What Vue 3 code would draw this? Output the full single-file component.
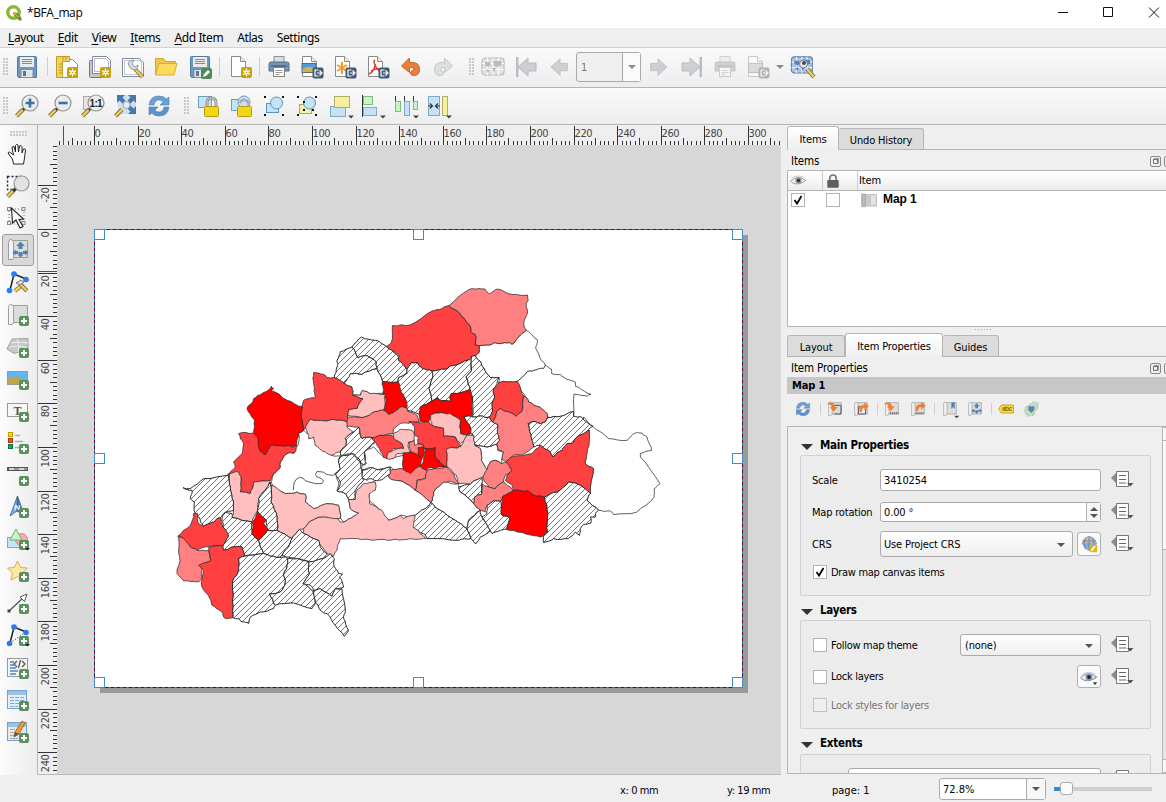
<script setup>
// ---------- icon fragments ----------
const plus = '<g transform="translate(13 13)"><rect width="10" height="10" rx="2" fill="#5b8f5b"/><path d="M5 2v6M2 5h6" stroke="#fff" stroke-width="2"/></g>'
const star = '<g transform="translate(12 12)"><rect width="11" height="11" rx="2" fill="#c5a20c"/><path d="M5.500 1.500v8M2 3.500l7 4M9 3.500l-7 4" stroke="#fff" stroke-width="1.300"/><circle cx="5.500" cy="5.500" r="2" fill="#fff"/><circle cx="5.500" cy="5.500" r=".8" fill="#c5a20c"/></g>'
const exp = (c = '#415a75') => `<g transform="translate(12.500 12.500)"><rect width="11" height="11" rx="2" fill="${c}"/><path d="M6 2.500H2.500v6H6M4.500 5.500h4M7 3l2.500 2.500L7 8" fill="none" stroke="#fff" stroke-width="1.200"/></g>`
const pageShape = '<path d="M2.500 1.500h9l5 5v15h-14z" fill="#fff" stroke="#8a8a8a"/><path d="M11.500 1.500v5h5" fill="#eee" stroke="#8a8a8a"/>'
const floppy = '<path d="M2.500 2.500q0-1 1-1h17q1 0 1 1v20h-18l-1-1z" fill="#6d97c4" stroke="#54779f"/><rect x="5" y="2" width="14" height="10" fill="#ececec"/><path d="M7 4.500h10M7 6.500h10M7 8.500h10" stroke="#888"/><path d="M6 14.500h12v8H6z" fill="#e4e4e4" stroke="#7a8ea5"/><rect x="8" y="16" width="3" height="5" fill="#54779f"/>'
const handle = (x1, y1, x2, y2) => `<path d="M${x1} ${y1}L${x2} ${y2}" stroke="#75683c" stroke-width="4"/><path d="M${x1} ${y1}L${x2} ${y2}" stroke="#f0cf5a" stroke-width="2.400"/>`
const lens = handle(8, 15.5, 1.5, 22) + '<path d="M10.500 13.500L8 16" stroke="#333" stroke-width="3"/><circle cx="15" cy="9" r="8" fill="#ececec" stroke="#929292" stroke-width="1.200"/>'
const curl = '<path d="M4.500 2.500h17v17h-17z" fill="#dcdcdc" stroke="#9c9c9c"/><path d="M2.500 21.500v-17q0-3 2.500-3t2.500 3v15q0 2-2.500 2z" fill="#f3f3f3" stroke="#9c9c9c"/>'
const printer = '<rect x="7" y="1.500" width="10" height="8" fill="#d8dfe5" stroke="#87939d"/><path d="M2 9q0-2 2-2h16q2 0 2 2v7H2z" fill="#7795b8" stroke="#526e89"/><path d="M4 11h16" stroke="#48627b" stroke-width="1.500"/><rect x="6.500" y="12.500" width="11" height="9" fill="#fff" stroke="#808080"/><path d="M8.500 15.500h7M8.500 17.500h7M8.500 19.500h4" stroke="#999"/>'
const refresh = '<path d="M2 11q1-9 10-9 5 0 7 3l3-2v8h-9l3-3q-1-2-4-2-4 0-5 5z" fill="#6d9fd0" stroke="#4c80b5" stroke-width=".6"/><path d="M22 13q-1 9-10 9-5 0-7-3l-3 2v-8h9l-3 3q1 2 4 2 4 0 5-5z" fill="#5d92c8" stroke="#4c80b5" stroke-width=".6"/>'
const corners = '<g fill="#111"><rect x="2" y="2" width="2" height="2"/><rect x="20" y="2" width="2" height="2"/><rect x="2" y="20" width="2" height="2"/><rect x="20" y="20" width="2" height="2"/></g>'
const padlock = '<path d="M11 13v-4q0-5 4.500-5t4.500 5v4" fill="none" stroke="#909090" stroke-width="3"/><path d="M11 13v-4q0-5 4.500-5t4.500 5v4" fill="none" stroke="#d8d8d8" stroke-width="1"/><rect x="8.500" y="12.500" width="14" height="10" rx="1" fill="#f2d61b" stroke="#b89d10"/>'
const drop = '<path d="M19 21.500h6l-3 3z" fill="#444"/>'
const arrowL = 'M1 12L11 3v5h8v8h-8v5z'
const node = '<path d="M4 20L8 4l12 5" fill="none" stroke="#222" stroke-width="1.500"/>'
const dots = '<g fill="#2b7bf0"><circle cx="8" cy="4" r="2.800"/><circle cx="20" cy="9.500" r="2.800"/><circle cx="3.500" cy="20.500" r="2.800"/></g>'
const fourArrows = '<g transform="translate(14.500 11.500)" fill="#5580b0"><path d="M0-8l4.500 4.500h-2.500v3h-4v-3h-2.500zM0 8l3-3h-1v-2.500h-4V5h-1zM-8 3l3-3v1.500h2.500v3H-5V6zM8 3L5 0v1.500H2.500v3H5V6z"/></g>'
const gridMap = (f, s) => `<rect x="1" y="3" width="22" height="17" rx="3" fill="${f}" stroke="${s}" stroke-width="1.200"/><path d="M6.500 3v17M12 3v17M17.500 3v17M1 8.500h22M1 14.500h22" stroke="#fff" stroke-width="1"/><path d="M4 7h5l1 3-3 2-3-2zM12 6h8l1 4-5 2-3-1zM11 13h4l-2 5zM5 14l4 1-2 3z" fill="${s}"/>`
const eye = '<path d="M1 13Q11 3 22 12 12 20 3 15z" fill="#f6f6f6" stroke="#9b9b9b" stroke-width="1.400"/><path d="M2 9Q11 3 20 8" fill="none" stroke="#bbb"/>'

const icons = {
  save: floppy,
  newLayout: '<path d="M5.500 4.500h12l5 5v13h-17z" fill="#fff" stroke="#8a8a8a"/><path d="M1.500 1.500h13v5h-7v16h-6z" fill="#f3d45a" stroke="#c39c25"/><path d="M4 9h3M4 12h3M4 15h3M4 18h3M8 2v3M11 2v3" stroke="#b8921f"/>' + star,
  dup: '<rect x="1.500" y="5.500" width="17" height="17" rx="1" fill="#c6c6c6" stroke="#777"/><path d="M4.500 1.500h14l4 4v13h-18z" fill="#fff" stroke="#888"/><path d="M6.500 3.500h11l3 3v10h-14z" fill="#fff" stroke="#a9b9e0"/>' + star,
  manager: '<path d="M1.500 3.500h17l4 4v14h-21z" fill="#fff" stroke="#8a8a8a"/><rect x="3.500" y="5.500" width="17" height="14" fill="none" stroke="#b9c8ea"/>' + handle(14, 14, 21.5, 22) + '<path d="M13 5l-2 4 3 3 3-2q0 5-4 5-4-1-5-4l-1-3q1-3 6-3z" fill="#d8dadb" stroke="#828686" stroke-width=".8"/>',
  open: '<path d="M1.500 20V3.500h8l2 3h10V10" fill="#eec648" stroke="#d0a63a"/><path d="M1.500 20L5 8.500h18L20 20z" fill="#fbda5c" stroke="#d8ae40"/>',
  saveAs: floppy + '<g transform="translate(13 13)"><rect width="11" height="11" rx="2" fill="#4e8b56"/><path d="M2 9l1-3 4-4 2 2-4 4z" fill="#fff"/></g>',
  addPage: pageShape + star,
  print: printer,
  exImg: pageShape + '<rect x="2" y="8.500" width="14" height="9" fill="#4c9ede" stroke="#666"/><path d="M2.500 17v-3q5-3 8-2l5 2v3z" fill="#c9b45b"/>' + exp(),
  exSvg: pageShape + '<g stroke="#f59a23" stroke-width="2"><path d="M9 7v12M4 10l10 6M14 10l-10 6"/></g>' + exp(),
  exPdf: pageShape + '<path d="M9 5q-2 1 0 5 2 5 6 7M3 19q5-2 6.500-10M5 16q5-3 10-2" fill="none" stroke="#e63b1f" stroke-width="1.400"/>' + exp(),
  undo: '<path d="M2.500 11l8-8v4.500h3q7 0 7 7 0 6-6 6 -3 0-3-2.500 0-2.500 3-2.500 1-3-3-3h-1v5z" fill="#e8803a" stroke="#c4652a"/>',
  redo: '<path d="M20.500 11l-8-8v4.500h-3q-7 0-7 7 0 6 6 6 3 0 3-2.500 0-2.500-3-2.500-1-3 3-3h1v5z" fill="#dde1de" stroke="#c3c8c4"/>',
  atlas: gridMap('#e2e2e2', '#bcbcbc'),
  first: `<g transform="translate(3 0)"><path d="${arrowL}" fill="#ccd0d4" stroke="#b6bbc0"/></g><rect x="2" y="2" width="2.500" height="20" fill="#b9bdc1"/>`,
  prev: `<g transform="translate(3 1) scale(.92)"><path d="${arrowL}" fill="#ccd0d4" stroke="#b6bbc0" stroke-width=".8"/></g>`,
  next: `<g transform="translate(22 1) scale(-.92 .92)"><path d="${arrowL}" fill="#ccd0d4" stroke="#b6bbc0" stroke-width=".8"/></g>`,
  last: `<g transform="translate(21 0) scale(-1 1)"><path d="${arrowL}" fill="#ccd0d4" stroke="#b6bbc0"/></g><rect x="19.500" y="2" width="2.500" height="20" fill="#b9bdc1"/>`,
  printOff: `<g opacity=".35" style="filter:grayscale(1)">${printer}</g>`,
  exOff: `<g opacity=".4" style="filter:grayscale(.8)">${pageShape}<rect x="2.500" y="8.500" width="14" height="9" fill="#a9b8c4" stroke="#777"/><path d="M3 17v-3q5-3 8-2l5 2v3z" fill="#c9b48b"/>${exp('#555')}</g>`,
  atlasSet: '<g transform="translate(-1.500 -1) scale(.95 .95)">' + gridMap('#a9c4e4', '#587fae') + '</g>' + handle(15, 14, 22, 22) + '<circle cx="11.500" cy="9" r="4" fill="#e8eef0" stroke="#777"/><circle cx="12" cy="8" r="2" fill="#446"/>',
  zin: lens + '<path d="M15 4.500v9M10.500 9h9" stroke="#3a6fa8" stroke-width="2.600"/>',
  zout: lens + '<path d="M10.500 9h9" stroke="#3a6fa8" stroke-width="2.600"/>',
  z11: '<rect x="2.500" y="2.500" width="16" height="13" fill="#e4e4e4" stroke="#aaa"/>' + lens + '<text x="8.500" y="13" font-size="10" font-weight="700" font-family="Liberation Sans, sans-serif" fill="#222" textLength="13">1:1</text>',
  zfull: '<rect x="4" y="1" width="18" height="19" fill="#cfdff0"/><g fill="#4577ab"><path d="M3 1h8L8.500 3.500l3 3-3 3-3-3L3 9zM22 1h-8l2.500 2.500-3 3 3 3 3-3L22 9zM22 20h-8l2.500-2.500-3-3 3-3 3 3L22 12z"/></g>' + handle(8, 15.5, 1.5, 22) + '<circle cx="12.500" cy="11" r="3.500" fill="#e8edf2" stroke="#8aa"/>',
  refresh,
  lock: '<rect x="2.500" y="2.500" width="13" height="11" fill="#c5e2f7" stroke="#6c9cbf"/>' + padlock,
  unlock: '<rect x="2.500" y="5.500" width="11" height="11" fill="#c5e2f7" stroke="#6c9cbf"/><circle cx="15" cy="8" r="6" fill="#c5e2f7" stroke="#6c9cbf"/><path d="M11 9q2-4 5-3 4 1 4 7" fill="none" stroke="#aaa" stroke-width="2.600"/><rect x="8.500" y="12.500" width="14" height="10" rx="1" fill="#f2d61b" stroke="#b89d10"/>',
  group: corners + '<rect x="4.500" y="9.500" width="12" height="9" fill="#c5e2f7" stroke="#5b93be"/><circle cx="14.500" cy="9" r="6" fill="#c5e2f7" stroke="#5b93be"/>',
  ungroup: corners + '<rect x="4.500" y="10.500" width="12" height="9" fill="#f6f1a3" stroke="#a9a26b"/><circle cx="14.500" cy="9" r="6" fill="#c5e2f7" stroke="#5b93be"/><g fill="#111"><rect x="8" y="7" width="2" height="2"/><rect x="8" y="15" width="2" height="2"/><rect x="17" y="15" width="2" height="2"/></g>',
  raise: '<rect x="1.500" y="12.500" width="15" height="10" fill="#c5e2f7" stroke="#7fa9c8"/><rect x="5.500" y="2.500" width="15" height="11" fill="#f4f09b" stroke="#b3ab68"/>' + drop,
  align: '<path d="M1.500 1v22" stroke="#333"/><rect x="2.500" y="2.500" width="9" height="8" fill="#c8f5c8" stroke="#82b982"/><rect x="2.500" y="13.500" width="13" height="8" fill="#c5e2f7" stroke="#7fa9c8"/>' + drop,
  distribute: '<path d="M1.500 2v7M10.500 2v7M19.500 2v7" stroke="#333"/><rect x="1.500" y="7.500" width="5" height="10" fill="#c8f5c8" stroke="#82b982"/><rect x="10.500" y="7.500" width="5" height="14" fill="#c5e2f7" stroke="#7fa9c8"/><rect x="19.500" y="7.500" width="4" height="8" fill="#c8f5c8" stroke="#82b982"/>' + drop,
  resize: '<rect x="1.500" y="2.500" width="11" height="19" fill="#c5e2f7" stroke="#7fa9c8"/><rect x="15.500" y="2.500" width="5" height="19" fill="#f4f09b" stroke="#b3ab68"/><path d="M1 12h4M3 9.500L5.500 12 3 14.500M13 12H9M11 9.500L8.500 12l2.500 2.500" fill="none" stroke="#333" stroke-width="1.200"/>' + drop,
  pan: '<path d="M7.500 22l-1-5-4-5q-1-2 1-2l4 3L6 6q0-2 2-1.500L9.500 10V3.500q1-2 2.500-.5l.5 7 1-6q2-1 2.500.5L16 11l1.500-4q1.500-1 2 1L18.500 16l-1 6z" fill="#fff" stroke="#222" stroke-width="1"/>',
  zoomTool: '<rect x="1.500" y="2.500" width="14" height="13" fill="none" stroke="#222" stroke-width="1.400" stroke-dasharray="2 2"/>' + handle(8, 16, 1.5, 22.5) + '<path d="M10 14.500L7 17" stroke="#333" stroke-width="3"/><circle cx="15.500" cy="9.500" r="7.500" fill="#e3e3e3" stroke="#999" stroke-width="1.200"/>',
  select: '<path d="M3 3h15v15H3z" fill="none" stroke="#777" stroke-dasharray="1 2"/><g fill="#eee" stroke="#888"><rect x="1.500" y="1.500" width="3" height="3"/><rect x="16" y="1.500" width="3" height="3"/><rect x="1.500" y="15.500" width="3" height="3"/><rect x="16" y="15.500" width="3" height="3"/></g><path d="M5.500 2l1 15 3.500-3 4 8 3-1.500-4-7 4.500-.5z" fill="#fff" stroke="#222" stroke-width="1.100"/>',
  moveContent: curl + fourArrows,
  editNodes: node + handle(9, 21, 17, 14) + handle(14, 14, 21, 21) + '<path d="M10 13l5-3 3 2-4 3z" fill="#ddd" stroke="#777"/>' + dots,
  addMap: curl + plus,
  add3d: '<path d="M1 14L6 4l16-.5v11l-8 2-6 2z" fill="#c9c9c9" stroke="#a0a0a0"/><path d="M5 8l8-1 9 1M3 12l10-1 8 2M11 4l2 7-1 6" stroke="#eee" fill="none"/>' + plus,
  addPic: '<rect x="1.500" y="4.500" width="20" height="13" fill="#63b5ea" stroke="#999"/><path d="M2 17v-5q8-4 12-1l7 3v3z" fill="#c4a44b"/>' + plus,
  addLabel: '<rect x="1.500" y="4.500" width="20" height="13" fill="#f7f7f7" stroke="#999"/><text x="7.500" y="15.500" font-size="12" font-weight="700" font-family="Liberation Serif, serif" fill="#555">T</text>' + plus,
  legend: '<rect x="2.500" y="1.500" width="4" height="4" fill="#ffd51a" stroke="#c99b00"/><rect x="2.500" y="7.500" width="4" height="4" fill="#f0501e" stroke="#a93815"/><rect x="2.500" y="13.500" width="4" height="4" fill="#12a85d" stroke="#0b7440"/><path d="M9 4.500h5M9 10.500h8M9 16.500h4" stroke="#aaa" stroke-width="1.600"/>' + plus,
  scalebar: '<rect x="1" y="4" width="21" height="4" fill="#555"/><path d="M3 6h5M13 6h5" stroke="#fff" stroke-width="1.600"/><path d="M8 6h5M18 6h3" stroke="#b0b0b0" stroke-width="1.600"/>' + plus,
  north: '<path d="M11.500 1L4 21l7-5z" fill="#86aede" stroke="#365f8e" stroke-width=".8"/><path d="M11.500 1l7 20-7.500-5z" fill="#4a77a8" stroke="#365f8e" stroke-width=".8"/><text x="8.500" y="14.500" font-size="8" font-weight="700" font-family="Liberation Sans, sans-serif" fill="#fff">N</text>' + plus,
  shape: '<rect x="1.500" y="10.500" width="13" height="10" fill="#c5e2f7" stroke="#7fa9c8"/><circle cx="15.500" cy="12.500" r="6" fill="#f5adad" stroke="#d58484"/><path d="M10 2l6 11H4z" fill="#c8f5c8" stroke="#72ac72"/>' + plus + '<path d="M19 21h5l-2.500 2.500z" fill="#222"/>',
  marker: '<path d="M11.500 2l3 6.500 7 .5-5 5 1.500 7-6.500-3.500L5 21l1.500-7L1.500 9l7-.5z" fill="#fce9a2" stroke="#dba95c"/>' + plus,
  arrow: '<path d="M3 20L18 6" stroke="#555" stroke-width="1.300"/><path d="M21 3l-7 3 4.500 4.500z" fill="#fff" stroke="#555"/><rect x="1.500" y="18.500" width="3" height="3" fill="#444"/>' + plus,
  nodeItem: node + '<path d="M4 20L20 9" stroke="#222" stroke-dasharray="1 2"/>' + dots + plus + '<path d="M19 21h5l-2.500 2.500z" fill="#222"/>',
  html: '<rect x="1.500" y="2.500" width="20" height="18" fill="#f4f4f4" stroke="#999"/><path d="M4 6h4M4 9h4M4 12h6M4 15h8M4 18h6" stroke="#4b87c2" stroke-width="1.500"/><path d="M11 5L8 8l3 3M16 5l3 3-3 3M14.500 4l-2 8" fill="none" stroke="#555" stroke-width="1.300"/>' + plus,
  table: '<rect x="1.500" y="2.500" width="19" height="18" fill="#e5eff9" stroke="#72a2cc"/><rect x="2" y="3" width="18" height="4" fill="#9cc1e3"/><path d="M4 9.500h14M4 12.500h14M4 15.500h14M4 18.500h8" stroke="#7ba9cf" stroke-dasharray="4 1"/>' + plus,
  tableEdit: '<rect x="1.500" y="2.500" width="19" height="18" fill="#e9e9e9" stroke="#72a2cc"/><rect x="2" y="3" width="18" height="4" fill="#9cc1e3"/><path d="M4 9.500h5M4 12.500h6M4 15.500h5M4 18.500h8" stroke="#aaa"/><path d="M9 12l7-11 3 2-6 11-5 3z" fill="#eb9a3d" stroke="#8e5b1d" stroke-width=".8"/><path d="M9 12l-1 5 5-3z" fill="#555"/>' + plus,
  viewTo: curl + '<path d="M8 6.500h13v13h-10" fill="none" stroke="#555" stroke-width="1.500"/><path d="M1 3q10-3 11 6h4l-6 7-6-7h3Q7 5 1 5z" fill="#ee7f35"/>',
  viewFrom: curl + '<path d="M8 8.500h11v11h-11z" fill="#eee" stroke="#555" stroke-width="1.500"/><path d="M10 17q-3-12 7-11V2l6.500 6L17 14v-4q-4 0-4 7z" fill="#ee7f35"/>',
  scaleTo: curl + '<path d="M9 18.500h13" stroke="#777" stroke-width="3" stroke-dasharray="2 1"/><path d="M1 3q10-3 11 5h4l-6 7-6-7h3Q7 5 1 5z" fill="#ee7f35"/>',
  scaleFrom: curl + '<path d="M8 18.500h13" stroke="#777" stroke-width="3" stroke-dasharray="2 1"/><path d="M9 15q-2-11 8-10V1l6.500 6L17 13V9q-5 0-5 6z" fill="#ee7f35"/>',
  bookmark: curl + '<path d="M14 2h5v10l-2.500-3-2.500 3z" fill="#4f82b5"/><path d="M18 22h8l-4 4z" fill="#444"/>',
  interact: curl + fourArrows,
  abc: '<path d="M1 12l4-6h18v12H5z" fill="#fbe04a" stroke="#bfa012" stroke-width="1.400"/><text x="6" y="15.500" font-size="10" font-weight="700" font-family="Liberation Sans, sans-serif" fill="#8a6d10" textLength="15">abc</text>',
  clip: '<path d="M4 9l6-4 5-4 8 2-1 9-4 2-1 7-11 2-4-7z" fill="#c3dac6" stroke="#86ad8b" stroke-dasharray="2 2"/><path d="M8 8h9v5l-4 5-5-4z" fill="#5b88a0"/>',
  eye: eye + '<circle cx="12" cy="12" r="4.500" fill="#999"/><circle cx="12" cy="12" r="2.300" fill="#333"/>',
  eyeMenu: eye + '<circle cx="12" cy="12" r="4.800" fill="#7b9cc0"/><circle cx="12" cy="12" r="2.500" fill="#223"/><path d="M17 19h6l-3 4z" fill="#444"/>',
  lockHead: '<path d="M7 12V8q0-5 5-5t5 5v4" fill="none" stroke="#777" stroke-width="2.600"/><rect x="3" y="11" width="18" height="12" rx="2" fill="#5e5e5e"/>',
  item: '<path d="M6 4h17v17H6z" fill="#e2e2e2" stroke="#999"/><path d="M1 3h6v19H1z" fill="#b9b9b9" stroke="#999"/><path d="M8 5h7v15H8z" fill="#c8c8c8"/>',
  globe: '<path d="M3 12q2-9 9-10 8 1 10 10z" fill="#b7bdc2" stroke="#7f8a92"/><path d="M3 12q4 9 10 9 7-1 8-9z" fill="#7cb0e2"/><path d="M12 2v19M7 4q-3 7 0 15M17 4q3 7 0 15M3 8h18" stroke="#6d7b88" fill="none"/><rect x="13" y="13" width="10" height="10" rx="1" fill="#e2b721"/><path d="M15 21l5-6" stroke="#fff" stroke-width="2"/>',
  dd: '<path d="M1 8l6-6v12z" fill="#8a8a8a"/><path d="M6.500 1.500h12v15h-12z" fill="#fff" stroke="#777"/><path d="M9 5.500h7M9 9.500h7M9 13h7" stroke="#666"/><path d="M17 13h6.500l-3.200 3.500z" fill="#555"/>',
}

// [name, left margin]
const row1 = [['grip', 3], ['save', 7], ['sep', 8], ['newLayout', 7], ['dup', 9], ['manager', 9], ['open', 9], ['saveAs', 10], ['sep', 7], ['addPage', 9], ['sep', 6], ['print', 7], ['exImg', 9], ['exSvg', 9], ['exPdf', 9], ['undo', 9], ['redo', 9], ['grip', 13], ['atlas', 7], ['first', 9], ['prev', 9], ['spin', 5], ['next', 5], ['last', 10], ['printOff', 9], ['exOff', 9], ['caret', 6], ['atlasSet', 8]]
const row2 = [['grip', 3], ['zin', 7], ['zout', 9], ['z11', 9], ['zfull', 9], ['refresh', 9], ['grip', 13], ['lock', 7], ['unlock', 9], ['group', 9], ['ungroup', 9], ['raise', 10], ['align', 8], ['distribute', 9], ['resize', 9]]
const side = ['pan', 'zoomTool', 'select', 'moveContent', 'editNodes', 'addMap', 'add3d', 'addPic', 'addLabel', 'legend', 'scalebar', 'north', 'shape', 'marker', 'arrow', 'nodeItem', 'html', 'table', 'tableEdit']
const propTools = [['refresh', 7], ['sep', 9], ['viewTo', 6], ['viewFrom', 10], ['sep', 8], ['scaleTo', 6], ['scaleFrom', 10], ['sep', 8], ['bookmark', 7], ['interact', 9], ['sep', 8], ['abc', 6], ['clip', 9]]
const menus = [['L', 'ayout'], ['E', 'dit'], ['V', 'iew'], ['I', 'tems'], ['A', 'dd Item'], ['', 'Atlas'], ['', 'Settings']]

// ---------- rulers ----------
const unit = 2.18
const ticks = (from, to, base) => {
  const out = []
  for (let v = from; v <= to; v += 2) out.push({ v, p: Math.round(base + v * unit) + 0.5, k: v % 20 === 0 ? 2 : v % 10 === 0 ? 1 : 0 })
  return out
}
const hTicks = ticks(-16, 314, 94)
const vTicks = ticks(-38, 248, 229)

// ---------- map provinces ----------
const origins = { A: [0, 0], B: [630, 0], C: [0, 450], D: [630, 420] }
const fills = { w: '#fff', p: '#ffbfbf', s: '#ff8080', r: '#ff4040', x: '#ff0000', h: 'url(#hatch)' }
const provinces = [
  ['C', 'w', '385,10 400,0 430,20 450,50 485,75 510,78 505,95 510,115 495,130 505,155 500,182 525,190 535,208 540,235 565,248 550,258 520,275 510,265 505,225 470,220 430,235 405,215 405,192 380,185 345,190 310,170 302,155 310,130 330,110 330,95 350,70 372,68 385,40'],
  ['C', 'w', '582,65 610,50 640,80 655,85 700,75 698,95 700,118 670,120 660,110 620,118 600,112 575,118 575,100 585,90'],
  ['D', 'w', '-15,150 10,145 30,175 65,182 105,210 152,247 135,265 108,285 80,290 60,285 25,300 5,275 -35,240 -35,190 -15,180'],
  ['D', 'w', '190,185 235,190 240,215 280,250 300,270 265,300 260,325 225,300 180,270 152,247 160,215'],
  ['D', 'w', '283,75 320,80 350,72 352,90 370,95 365,130 345,120 330,125 320,148 303,120 300,85'],
  ['D', 'w', '610,-10 637,18 685,55 740,60 760,40 785,38 800,50 814,90 780,100 780,110 839,190 822,205 822,230 768,276 700,283 690,272 655,270 620,240 630,220 640,145 614,130 628,30 610,38'],
  ['B', 'w', '495,254 513,266 514,280 540,282 552,292 585,305 586,318 620,338 632,342 620,348 608,346 581,341 580,408 560,404 540,408 502,411 500,400 478,380 445,365 430,340 410,303 430,286 440,274 470,268 490,264'],
  ['B', 'w', '285,194 328,194 340,188 360,190 388,187 395,192 415,170 438,150 471,178 466,200 478,230 495,254 490,264 470,268 440,274 430,286 410,303 385,305 368,303 355,308 356,292 330,292 312,265 300,243 285,226 297,215 297,198'],
  ['A', 'w', '540,280 575,282 620,265 637,304 642,340 600,340 577,330 570,345 547,345 545,320 520,308 530,300 520,290'],
  ['B', 's', '206,76 262,30 276,25 314,26 327,41 352,26 398,43 442,44 443,62 437,68 442,90 432,120 431,137 438,150 415,170 395,192 388,187 360,190 340,188 328,194 285,194 284,162 271,154 270,138 243,107 232,93'],
  ['B', 'r', '206,76 232,93 243,107 270,138 271,154 284,162 285,194 297,198 297,215 285,226 273,228 268,238 210,257 194,267 155,272 126,265 112,247 92,247 80,268 68,255 52,240 56,225 16,198 32,188 36,136 89,134 155,92 185,85'],
  ['A', 'h', '545,200 574,170 615,180 645,196 682,224 684,240 710,268 710,280 685,292 683,305 637,304 620,265 618,245 590,226 580,226 562,232'],
  ['A', 'h', '510,214 545,200 562,232 580,226 590,226 618,245 620,265 575,282 540,280 520,308 492,292 500,260 500,240'],
  ['B', 'h', '80,268 92,247 112,247 126,265 155,272 158,290 146,325 155,350 155,362 120,380 117,402 105,397 80,390 76,360 60,335 53,305 55,292 80,280'],
  ['B', 'h', '155,272 194,267 210,257 268,238 274,240 274,270 257,290 270,330 248,335 213,340 210,364 180,362 172,352 155,362 146,325 158,290'],
  ['B', 'h', '274,228 285,226 300,243 312,265 330,292 356,292 350,310 340,325 343,350 335,375 337,392 327,410 300,407 277,410 277,350 270,330 257,290 274,270'],
  ['B', 'h', '250,408 277,410 300,407 327,410 337,425 352,432 352,460 358,480 350,492 320,500 283,492 280,465 270,460 270,440 262,430'],
  ['A', 'x', '637,304 683,305 690,325 710,365 710,385 690,380 670,397 655,403 640,390 647,360 637,340 642,330 635,312'],
  ['A', 's', '530,410 575,412 590,407 620,393 640,390 655,403 670,397 690,380 710,385 712,393 740,405 747,425 730,425 715,430 690,430 670,445 668,460 630,465 605,472 575,475 565,440 530,438'],
  ['A', 'p', '577,330 600,340 645,342 640,390 620,393 590,407 575,412 532,405 535,388 560,385 578,355 547,345 570,345'],
  ['A', 'r', '430,277 460,282 470,292 490,292 520,308 545,320 547,345 578,355 560,385 535,388 532,405 530,425 490,418 465,422 420,416 410,440 400,450 392,400 400,360 435,353 430,310'],
  ['A', 'p', '405,440 420,416 465,422 490,418 530,425 530,440 550,455 525,475 528,495 510,515 485,525 465,515 435,495 430,470 415,475'],
  ['A', 'h', '565,440 575,475 605,472 615,485 600,500 582,515 588,550 580,555 550,520 510,525 510,515 528,495 525,475 550,455'],
  ['C', 'r', '205,10 250,8 265,15 268,60 285,73 305,43 355,45 378,55 372,68 350,70 330,95 330,110 310,130 300,150 250,155 240,190 210,185 212,140 172,132 195,110 190,95 215,70 220,40'],
  ['A', 'x', '230,383 250,355 275,340 300,325 303,318 310,325 303,332 330,345 350,360 397,380 392,400 400,450 385,458 378,500 355,495 305,493 285,523 268,510 262,470 250,458 253,420 235,395'],
  ['B', 'x', '155,362 172,352 180,362 210,364 213,340 248,335 270,330 277,360 275,405 250,408 255,420 270,440 272,460 260,463 240,460 240,420 210,400 175,398 150,405 145,425 120,424 117,402 120,380'],
  ['B', 'p', '150,405 175,398 210,400 240,420 240,460 260,463 255,480 240,490 225,470 190,468 190,445 155,435'],
  ['B', 'r', '410,303 425,340 430,350 424,395 408,408 380,393 360,385 350,392 337,425 327,410 337,392 335,375 343,350 340,325 355,308 368,303 385,305'],
  ['B', 's', '430,345 445,365 478,380 500,400 502,411 495,425 480,430 455,424 443,430 447,445 455,480 460,500 430,522 400,525 380,543 365,537 370,515 355,510 350,492 358,480 352,460 352,432 337,425 350,392 360,385 380,393 408,408 424,395'],
  ['B', 'h', '502,411 540,408 580,394 580,408 604,410 638,438 625,448 610,460 590,470 580,487 560,490 545,510 518,530 505,510 480,495 460,500 455,480 447,445 443,430 455,424 480,430 495,425'],
  ['D', 'r', '85,4 120,8 145,5 155,15 190,25 190,48 225,50 242,78 220,82 205,85 200,110 200,140 178,125 165,110 165,82 130,85 128,72 112,70 115,50 103,45 103,20'],
  ['D', 's', '85,65 102,60 103,75 112,70 130,75 128,90 113,105 90,95'],
  ['D', 'r', '-25,52 0,45 35,45 65,70 70,85 55,85 40,85 20,115 10,112 0,92 -12,70'],
  ['D', 'p', '38,40 60,27 95,30 103,45 102,60 85,65 85,85 90,95 50,100 40,115 20,115 25,95 55,85 70,85 65,70 40,55'],
  ['D', 'x', '68,100 90,95 113,105 125,115 118,138 105,145 90,160 68,152 66,130'],
  ['D', 'x', '135,85 165,82 165,110 178,125 200,140 175,140 165,145 145,143 133,150 118,138 130,120'],
  ['D', 'x', '113,82 133,82 133,100 125,115 113,98'],
  ['D', 's', '30,150 65,145 90,160 105,145 118,138 140,152 135,175 110,180 105,210 65,182 35,178 25,170'],
  ['D', 's', '140,150 165,145 200,140 220,160 235,190 210,183 190,185 160,215 152,247 105,210 110,180 135,175'],
  ['D', 'p', '200,85 225,83 242,78 262,45 280,45 283,75 300,85 303,120 320,148 315,168 285,180 270,192 235,190 228,165 200,140 200,110'],
  ['D', 'h', '240,215 235,200 270,192 285,180 305,172 303,222 283,230 280,250'],
  ['D', 'h', '97,290 135,265 152,247 180,270 225,300 260,325 272,355 235,360 140,355 130,340 97,320'],
  ['D', 's', '320,148 330,125 345,120 365,130 385,125 395,150 375,165 370,185 345,205 325,200 308,175'],
  ['D', 's', '305,190 325,200 345,205 370,185 395,205 400,220 370,225 362,243 340,242 320,255 315,275 300,270 280,250 283,230 303,222'],
  ['D', 'h', '260,325 265,300 300,270 305,290 330,330 300,350 287,370 272,355'],
  ['D', 'h', '305,290 320,280 320,255 340,242 362,243 365,285 390,292 378,325 360,330 335,340'],
  ['D', 'r', '378,125 400,108 455,100 480,75 505,90 518,110 545,90 560,70 580,67 590,50 610,40 625,28 628,50 620,100 614,130 640,145 630,220 600,195 565,185 530,215 492,230 470,228 440,212 400,210 395,195 375,180 380,165 395,150'],
  ['D', 'x', '365,230 400,210 440,212 470,228 492,230 503,280 498,320 502,335 490,345 480,350 445,343 411,335 378,328 390,292 365,285'],
  ['D', 'h', '492,230 530,215 565,185 600,195 630,220 620,240 655,270 645,280 645,290 630,290 632,308 610,312 600,325 598,345 585,335 565,355 520,355 490,367 490,345 502,335 503,280'],
  ['C', 'h', '510,78 545,70 570,95 575,130 580,150 555,180 555,208 535,208 525,190 500,182 510,155 495,130 510,115 505,95'],
  ['C', 'h', '575,120 600,112 620,118 660,110 660,130 640,145 625,150 600,145 590,150 575,140'],
  ['C', 'p', '555,208 560,180 580,160 615,155 615,180 597,190 597,220 635,240 655,270 690,255 700,265 730,255 735,260 728,290 750,310 768,325 735,327 700,328 650,330 615,329 580,327 545,325 510,325 500,360 490,378 470,370 450,345 445,330 400,310 400,295 425,270 450,260 500,262 510,275 520,275 550,258 565,248 540,235 535,208'],
  ['C', 'p', '178,130 205,125 212,140 210,185 240,190 250,155 300,150 295,165 265,205 262,240 245,275 185,262 190,240 190,215 180,170'],
  ['C', 'p', '302,165 345,190 380,185 405,192 405,215 430,235 470,220 505,225 510,265 450,260 425,270 400,295 388,297 365,325 320,300 320,260 302,215'],
  ['C', 'h', '38,172 60,175 100,145 175,135 180,170 190,215 190,240 160,250 150,262 130,275 100,288 85,260 75,250 72,215 60,205 65,180 50,178'],
  ['C', 'h', '300,155 302,215 320,260 320,300 292,300 288,270 262,243 265,205'],
  ['C', 'h', '155,265 165,245 185,250 185,262 245,275 245,310 265,330 280,370 222,378 215,350 185,350 160,360 158,345 175,318 158,290'],
  ['C', 'h', '292,300 320,300 365,325 355,350 335,375 320,382 280,370 265,330 275,320'],
  ['C', 'x', '262,243 288,270 280,280 292,295 275,320 265,330 245,310 247,275'],
  ['C', 'h', '365,325 388,297 400,310 445,330 450,350 470,372 455,385 430,395 380,385 345,380 335,375 355,350'],
  ['C', 'r', '22,318 60,285 70,250 82,250 85,280 100,288 130,275 150,262 158,290 175,318 158,345 105,350 80,360 60,350 40,325'],
  ['C', 's', '25,320 40,325 60,350 80,360 115,360 122,390 100,400 95,440 85,455 40,452 20,430 28,380'],
  ['C', 'r', '115,352 158,345 160,360 185,350 215,350 222,378 205,385 205,420 188,450 188,485 188,522 188,562 165,565 155,545 125,525 115,495 95,470 95,440 100,420 85,405 122,390'],
  ['C', 'h', '205,385 222,378 280,370 320,382 345,380 352,385 350,410 340,435 345,455 330,485 298,490 315,525 310,535 270,545 240,560 235,580 215,575 205,565 188,562 188,522 188,485 188,450 205,420'],
  ['C', 'h', '352,385 380,385 415,395 418,430 398,460 415,470 430,490 435,520 425,535 370,518 315,525 298,490 330,485 345,455 340,435 350,410'],
  ['C', 'h', '415,395 455,385 480,370 492,385 490,400 505,430 517,432 508,440 520,470 495,475 485,498 450,475 430,480 420,465 398,460 418,430'],
  ['C', 'h', '430,480 450,475 485,498 495,475 515,475 525,540 520,565 535,600 522,618 495,585 470,550 450,540 435,515 430,490'],
]
// Midpoint displacement gives every edge a small irregularity, identical for both neighbours.
function rough(a, b, depth) {
  const len = Math.hypot(b[0] - a[0], b[1] - a[1])
  if (depth === 0 || len < 9) return [b]
  const seed = Math.sin((a[0] + b[0]) * 12.9898 + (a[1] + b[1]) * 78.233) * 43758.5453
  const amp = (seed - Math.floor(seed) - 0.5) * Math.min(len * 0.22, 5)
  const flip = a[0] < b[0] || (a[0] === b[0] && a[1] < b[1]) ? 1 : -1
  const m = [(a[0] + b[0]) / 2 - ((b[1] - a[1]) / len) * amp * flip, (a[1] + b[1]) / 2 + ((b[0] - a[0]) / len) * amp * flip]
  return [...rough(a, m, depth - 1), ...rough(m, b, depth - 1)]
}
const shapes = provinces.map(([o, f, s]) => {
  const pts = s.split(' ').map((t) => { const [x, y] = t.split(',').map(Number); return [x + origins[o][0], y + origins[o][1]] })
  let out = []
  pts.forEach((p, i) => { out = out.concat(rough(p, pts[(i + 1) % pts.length], 2)) })
  return { fill: fills[f], hatch: f === 'h', pts: out.map((p) => (p[0] / 3 + 170.3).toFixed(1) + ',' + (p[1] / 3 + 280.3).toFixed(1)).join(' ') }
})
const handles = [[94.5, 229.5], [413.5, 229.5], [732.5, 229.5], [94.5, 453.5], [732.5, 453.5], [94.5, 677.5], [413.5, 677.5], [732.5, 677.5]]
</script>

<template>
  <div class="app">
    <header class="title">
      <svg class="logo" viewBox="0 0 16 16"><circle cx="7.500" cy="7.500" r="5.700" fill="none" stroke="#8ab833" stroke-width="3.400" /><path d="M8 8h3.500l4 5v2.500H13L8 10.500z" fill="#589632" /><path d="M7 7h3v2l3 3-1 1-3-3H7z" fill="#f0a044" /></svg>
      <span>*BFA_map</span>
      <svg class="winbtns" width="110" height="28" viewBox="0 0 110 28" fill="none" stroke="#111"><path d="M3 12.500h10M48.500 7.500h9v9h-9zM94 7.500l10 10M104 7.500l-10 10" /></svg>
    </header>
    <nav class="menu">
      <span v-for="m in menus" :key="m[1]"><u>{{ m[0] }}</u>{{ m[1] }}</span>
    </nav>
    <div v-for="(row, ri) in [row1, row2]" :key="ri" class="toolbar" :class="'tb' + ri">
      <template v-for="(t, i) in row" :key="i">
        <i v-if="t[0] === 'grip'" class="grip" :style="{ marginLeft: t[1] + 'px' }"></i>
        <i v-else-if="t[0] === 'sep'" class="sep" :style="{ marginLeft: t[1] + 'px' }"></i>
        <i v-else-if="t[0] === 'caret'" class="caret pale" :style="{ marginLeft: t[1] + 'px' }"></i>
        <div v-else-if="t[0] === 'spin'" class="spin"><span>1</span><b><i class="caret pale"></i></b></div>
        <svg v-else class="ic" viewBox="0 0 24 24" :style="{ marginLeft: t[1] + 'px' }" v-html="icons[t[0]]"></svg>
      </template>
    </div>

    <main class="main">
      <aside class="side">
        <i class="hgrip"></i>
        <div v-for="s in side" :key="s" class="tool" :class="{ on: s === 'moveContent' }"><svg class="ic" viewBox="0 0 24 24" v-html="icons[s]"></svg></div>
      </aside>

      <svg class="canvas" width="743" height="650" viewBox="38 125 743 650">
        <defs>
          <pattern id="hatch" width="6" height="6" patternUnits="userSpaceOnUse">
            <rect width="6" height="6" fill="#fff" />
            <path d="M-1 7L7 -1M-1 1L1 -1M5 7L7 5" stroke="#3c3c3c" stroke-width=".7" />
          </pattern>
        </defs>
        <rect x="38" y="125" width="743" height="650" fill="#efefef" />
        <rect x="57" y="145" width="724" height="630" fill="#d7d7d7" />
        <path d="M38 774.500h743" stroke="#b9b9b9" />
        <g stroke="#333" shape-rendering="crispEdges">
          <path v-for="t in hTicks" :key="'h' + t.v" :d="`M${t.p} 145V${[141, 138, 126][t.k]}`" />
          <path v-for="t in vTicks" :key="'v' + t.v" :d="`M57 ${t.p}H${[53, 50, 38][t.k]}`" />
          <path d="M63.500 126v19M38 271.500h19" stroke="#e81010" />
        </g>
        <g class="rule">
          <template v-for="t in hTicks" :key="'ht' + t.v"><text v-if="t.k === 2" :x="t.p" y="137">{{ t.v }}</text></template>
          <template v-for="t in vTicks" :key="'vt' + t.v"><text v-if="t.k === 2" :transform="`translate(49 ${t.p + 2}) rotate(-90)`" text-anchor="end">{{ t.v }}</text></template>
        </g>
        <rect x="100" y="235" width="648" height="458" fill="#999" />
        <rect x="94.500" y="229.500" width="648" height="458" fill="#fff" stroke="#3a8ec4" />
        <rect x="94.500" y="229.500" width="648" height="458" fill="none" stroke="#5a0a34" stroke-dasharray="4 2" />
        <g stroke="#2b2b2b" stroke-linejoin="round">
          <polygon v-for="(p, i) in shapes" :key="i" :points="p.pts" :fill="p.fill" :stroke-width="p.hatch ? 1 : 0.75" />
          <path d="M293.300 490L294 483 296 479.500 299.500 477.300 303 478 305 480.500 309 482 316 483.700 322 483.500 323.500 481 321.500 478.500 317 477 315.500 474.500 317 471.500 323 472 327 474.500 333 475.500 337 472" fill="none" stroke-width=".75" />
        </g>
        <g fill="#fff" stroke="#3a8ec4"><rect v-for="(h, i) in handles" :key="i" :x="h[0]" :y="h[1]" width="10" height="10" /></g>
      </svg>

      <section class="panel">
        <div class="tabs first">
          <span class="tab on items">Items</span><span class="tab undo">Undo History</span>
        </div>
        <div class="dockhead"><span>Items</span><i class="dock"><b></b></i><i class="dock cut"></i></div>
        <div class="tree">
          <div class="thead"><span class="c1"><svg width="17" height="17" viewBox="0 0 24 24" v-html="icons.eye"></svg></span><span class="c2"><svg width="14" height="16" viewBox="1 1 22 23" v-html="icons.lockHead"></svg></span><span class="c3">Item</span></div>
          <div class="trow">
            <i class="check on"><svg viewBox="0 0 12 12"><path d="M2.500 6L5 9.500 9.500 2" /></svg></i><i class="check second"></i>
            <svg width="16" height="16" viewBox="0 0 24 24" v-html="icons.item"></svg><b>Map 1</b>
          </div>
        </div>
        <div class="splitter"><i></i></div>
        <div class="tabs two">
          <span class="tab lay">Layout</span><span class="tab on ip">Item Properties</span><span class="tab gd">Guides</span>
        </div>
        <div class="dockhead d2"><span>Item Properties</span><i class="dock"><b></b></i><i class="dock cut"></i></div>
        <div class="mapbar">Map 1</div>
        <div class="ptools">
          <template v-for="(t, i) in propTools" :key="i">
            <i v-if="t[0] === 'sep'" class="sep" :style="{ marginLeft: t[1] + 'px' }"></i>
            <svg v-else width="16" height="16" viewBox="0 0 24 24" :style="{ marginLeft: t[1] + 'px' }" v-html="icons[t[0]]"></svg>
          </template>
        </div>
        <div class="scroll">
          <div class="body">
            <h3><i></i>Main Properties</h3>
            <div class="box b1">
              <div class="line l1"><label>Scale</label><div class="field">3410254</div><svg class="dd" viewBox="0 0 24 18" v-html="icons.dd"></svg></div>
              <div class="line l2"><label>Map rotation</label><div class="field rot">0.00 °<span class="ud"><i class="up"></i><i class="dn"></i></span></div><svg class="dd" viewBox="0 0 24 18" v-html="icons.dd"></svg></div>
              <div class="line l3"><label>CRS</label><div class="combo crs">Use Project CRS<i class="caret"></i></div><span class="btn"><svg width="18" height="18" viewBox="0 0 24 24" v-html="icons.globe"></svg></span><svg class="dd" viewBox="0 0 24 18" v-html="icons.dd"></svg></div>
              <div class="line l4"><i class="check on"><svg viewBox="0 0 12 12"><path d="M2.500 6L5 9.500 9.500 2" /></svg></i><span class="txt">Draw map canvas items</span></div>
            </div>
            <h3 class="h2"><i></i>Layers</h3>
            <div class="box b2">
              <div class="line m1"><i class="check"></i><span class="txt">Follow map theme</span><div class="combo theme">(none)<i class="caret"></i></div><svg class="dd" viewBox="0 0 24 18" v-html="icons.dd"></svg></div>
              <div class="line m2"><i class="check"></i><span class="txt">Lock layers</span><span class="btn end"><svg width="18" height="18" viewBox="0 0 24 24" v-html="icons.eyeMenu"></svg></span><svg class="dd" viewBox="0 0 24 18" v-html="icons.dd"></svg></div>
              <div class="line m3"><i class="check off"></i><span class="txt">Lock styles for layers</span></div>
            </div>
            <h3 class="h3"><i></i>Extents</h3>
            <div class="box b3"><div class="field"></div><svg class="dd" viewBox="0 0 24 18" v-html="icons.dd"></svg></div>
          </div>
          <div class="sbar"><i></i><b></b><u></u><i></i></div>
        </div>
      </section>
    </main>

    <footer class="status">
      <span class="s1">x: 0 mm</span><span class="s2">y: 19 mm</span><span class="s3">page: 1</span>
      <div class="zoom"><span>72.8%</span><b><i class="caret"></i></b></div>
      <div class="slider"><i></i><b></b></div>
    </footer>
  </div>
</template>

<style>
body { margin: 0; overflow: hidden; }
</style>
<style scoped>
.app { width: 1166px; height: 802px; overflow: hidden; display: flex; flex-direction: column; background: #efefef; font: 11px/14px "DejaVu Sans Condensed", "DejaVu Sans", sans-serif; letter-spacing: -.15px; color: #000; }
.app * { box-sizing: border-box; }
i { font-style: normal; }
.title { height: 28px; background: #fff; display: flex; align-items: center; font: 12px/16px "Open Sans", sans-serif; letter-spacing: -.4px; flex: none; }
.title span { margin-left: 5px; margin-top: -2px; }
.logo { width: 16px; height: 16px; margin-left: 6px; margin-top: -3px; }
.winbtns { margin-left: auto; margin-right: 1px; }
.menu { height: 19px; flex: none; display: flex; align-items: center; padding: 1px 0 0 8px; gap: 14px; font: 12px/18px "Noto Sans", sans-serif; letter-spacing: -.4px; }
.menu u { text-underline-offset: 2px; }
.toolbar { flex: none; display: flex; align-items: center; border-top: 1px solid #d2d2d2; background: linear-gradient(#fafafa, #ededed); }
.tb0 { height: 40px; padding-bottom: 2px; }
.tb1 { height: 38px; border-top-color: #b4b4b4; border-bottom: 1px solid #b4b4b4; }
.ic { width: 24px; height: 24px; flex: none; overflow: visible; }
.grip { width: 5px; height: 18px; background: radial-gradient(circle at 1px 1px, #c6c6c6 .7px, transparent 1px) 0 0/3px 3px; }
.sep { width: 1px; height: 19px; background: #cfcfcf; }
.caret { width: 0; height: 0; border: 4px solid transparent; border-top: 4px solid #555; border-bottom: 0; }
.caret.pale { border-top-color: #8c8c8c; }
.spin { width: 65px; height: 30px; margin-left: 5px; border: 1px solid #aaa; border-radius: 3px; display: flex; align-items: center; background: #efefef; color: #777; flex: none; }
.spin span { width: 45px; padding: 2px 0 0 4px; }
.spin b { flex: 1; align-self: stretch; border-left: 1px solid #aaa; background: #fafafa; display: flex; align-items: center; justify-content: center; }
.main { height: 650px; flex: none; display: flex; }
.side { width: 38px; border-right: 1px solid #b6b6b6; background: linear-gradient(90deg, #fbfbfb, #ededed); display: flex; flex-direction: column; align-items: center; }
.hgrip { width: 17px; height: 5px; margin: 6px 0 2px; flex: none; background: radial-gradient(circle at 1px 1px, #c6c6c6 .7px, transparent 1px) 0 0/3px 3px; }
.tool { width: 32px; height: 32.1px; flex: none; display: flex; align-items: center; justify-content: center; margin-right: 2px; }
.tool .ic { margin-left: 1px; }
.tool.on { border: 1px solid #9e9e9e; border-radius: 3px; background: #d9d9d9; }
.canvas { flex: none; }
.rule text { font: 11px "DejaVu Sans Condensed", "DejaVu Sans", sans-serif; fill: #444; letter-spacing: -.4px; }
.panel { width: 385px; flex: none; padding-left: 6px; display: flex; flex-direction: column; }
.tabs { display: flex; align-items: flex-end; border-bottom: 1px solid #b6b6b6; flex: none; }
.tabs.first { height: 25px; }
.tabs.two { height: 25px; }
.tab { height: 21px; border: 1px solid #b6b6b6; border-bottom: 0; background: #dcdcdc; line-height: 22px; padding-top: 1px; text-align: center; border-radius: 3px 3px 0 0; white-space: nowrap; }
.tab.on { height: 24px; background: linear-gradient(#fff, #efefef); margin-bottom: -1px; line-height: 24px; }
.items { width: 52px; } .undo { width: 85px; border-left: 0; }
.lay { width: 58px; } .ip { width: 98px; } .gd { width: 56px; border-left: 0; }
.dockhead { height: 20px; display: flex; align-items: center; padding: 2px 0 0 4px; font-size: 11.5px; flex: none; }
.dock { width: 11px; height: 11px; border: 1px solid #888; border-radius: 2px; margin-left: auto; display: flex; align-items: center; justify-content: center; }
.dock b { width: 5px; height: 5px; border: 1px solid #777; box-shadow: 1px -1px 0 #999; }
.dock.cut { margin: 0 -9px 0 3px; }
.tree { height: 157px; border: 1px solid #b4b4b4; border-right: 0; background: #fff; flex: none; }
.thead { height: 20px; display: flex; background: linear-gradient(#fff, #ececec); border-bottom: 1px solid #b4b4b4; line-height: 19px; }
.thead span { border-right: 1px solid #ccc; display: flex; align-items: center; }
.thead .c1 { width: 35px; padding-left: 2px; } .thead .c2 { width: 35px; padding-left: 3px; } .thead .c3 { padding-left: 1px; border: 0; }
.trow { display: flex; align-items: center; height: 18px; padding-left: 3px; }
.trow b { margin-left: 6px; margin-top: -2px; font: bold 12px "Liberation Sans", sans-serif; letter-spacing: -.1px; }
.trow svg { display: block; }
.check { width: 14px; height: 14px; border: 1px solid #b4b4b4; background: #fff; flex: none; display: block; }
.check.off { background: #efefef; border-color: #c2c2c2; }
.check svg { width: 12px; height: 12px; display: block; fill: none; stroke: #000; stroke-width: 1.800; }
.check.second { margin: 0 21px; }
.splitter { height: 5px; display: flex; justify-content: center; align-items: center; flex: none; }
.splitter i { width: 17px; height: 1px; margin-left: 14px; background: repeating-linear-gradient(90deg, #aaa 0 1px, transparent 1px 3px); }
.mapbar { height: 17px; background: #c7c7c7; padding-left: 5px; font-weight: bold; line-height: 17px; flex: none; }
.ptools { height: 32px; display: flex; align-items: center; padding: 0 0 2px 1px; flex: none; }
.ptools svg { overflow: visible; flex: none; }
.ptools .sep { height: 12px; background: #cfcfcf; }
.scroll { height: 348px; border: 1px solid #b6b6b6; border-right: 0; display: flex; overflow: hidden; }
.body { width: 374px; flex: none; padding-left: 12px; overflow: hidden; }
h3 { margin: 0; height: 28px; padding-top: 8px; font: bold 11.5px/18px "DejaVu Sans Condensed", "DejaVu Sans", sans-serif; letter-spacing: -.25px; display: flex; align-items: center; }
h3 i { border: 6px solid transparent; border-top: 6px solid #333; border-bottom: 0; margin: 3px 7px 0 1px; }
.box { width: 351px; border: 1px solid #d2d2d2; background: #ececec; display: flex; flex-direction: column; padding-left: 11px; border-radius: 2px; }
.b1 { height: 141px; padding-top: 13px; }
.line { display: flex; align-items: center; flex: none; }
.l1 { height: 22px; }
.l2 { height: 20px; margin-top: 11px; }
.l3 { height: 26px; margin-top: 9px; }
.l4 { height: 14px; margin-top: 8px; }
label { width: 68px; padding-top: 2px; letter-spacing: -.2px; white-space: nowrap; }
.txt { letter-spacing: -.3px; padding-top: 1px; }
.field { width: 221px; height: 22px; border: 1px solid #aaa; border-radius: 3px; background: #fff; line-height: 22px; padding-left: 3px; }
.rot { height: 20px; line-height: 20px; display: flex; }
.ud { width: 14px; height: 18px; margin-left: auto; border-left: 1px solid #b4b4b4; display: flex; flex-direction: column; justify-content: center; align-items: center; gap: 3px; background: #f7f7f7; }
.ud i { border: 4px solid transparent; border-top: 0; border-bottom: 4px solid #555; }
.ud .dn { border-bottom: 0; border-top: 4px solid #555; }
.combo { height: 26px; border: 1px solid #aaa; border-radius: 3px; background: linear-gradient(#fff, #eee); line-height: 26px; padding: 1px 7px 0 4px; display: flex; justify-content: space-between; align-items: center; }
.combo.crs { width: 193px; padding-left: 3px; }
.combo.theme { width: 141px; height: 22px; margin-left: auto; line-height: 22px; }
.btn { width: 24px; height: 24px; margin-left: 4px; border: 1px solid #b0b0b0; border-radius: 3px; background: #fafafa; display: flex; align-items: center; justify-content: center; }
.dd { width: 24px; height: 18px; margin-left: 9px; margin-top: -2px; flex: none; }
.line .check { margin: 0 4px 0 1px; }
.h2 { height: 24px; padding-top: 4px; }
.b2 { height: 109px; }
.m1 { height: 22px; margin-top: 13px; } .m2 { height: 23px; margin-top: 9px; } .m3 { height: 14px; margin-top: 10px; color: #777; }
.m1 .dd, .m2 .dd { margin-right: 16px; }
.btn.end { margin-left: auto; height: 23px; }
.h3 { height: 25px; padding-top: 3px; }
.b3 { height: 80px; flex-direction: row; padding: 13px 0 0 47px; }
.b3 .field { width: 253px; } .b3 .dd { margin-top: 1px; }
.sbar { flex: 1; border-left: 1px solid #b6b6b6; display: flex; flex-direction: column; background: #e6e6e6; }
.sbar i { height: 14px; background: #fafafa; border-bottom: 1px solid #b6b6b6; border-top: 1px solid #b6b6b6; }
.sbar b { height: 109px; background: #fafafa; border-bottom: 1px solid #b6b6b6; }
.sbar u { flex: 1; }
.status { flex: 1; display: flex; align-items: center; padding-top: 1px; letter-spacing: -.4px; }
.status > span { padding-top: 3px; }
.s1 { margin-left: 620px; width: 107px; } .s2 { width: 105px; } .s3 { width: 107px; letter-spacing: 0; }
.zoom { width: 107px; height: 22px; border: 1px solid #aaa; border-radius: 3px; background: #fff; display: flex; align-items: center; letter-spacing: 0; }
.zoom span { width: 86px; padding: 2px 0 0 3px; }
.zoom b { flex: 1; align-self: stretch; border-left: 1px solid #aaa; background: #f7f7f7; display: flex; align-items: center; justify-content: center; }
.slider { width: 98px; height: 14px; margin: -1px 0 0 8px; display: flex; align-items: center; background: linear-gradient(90deg, #2f8ad8 8px, #cfcfcf 8px) 0 5px/98px 4px no-repeat; }
.slider i { width: 6px; } .slider b { width: 13px; height: 13px; border: 1px solid #aaa; border-radius: 3px; background: #fafafa; }
</style>
